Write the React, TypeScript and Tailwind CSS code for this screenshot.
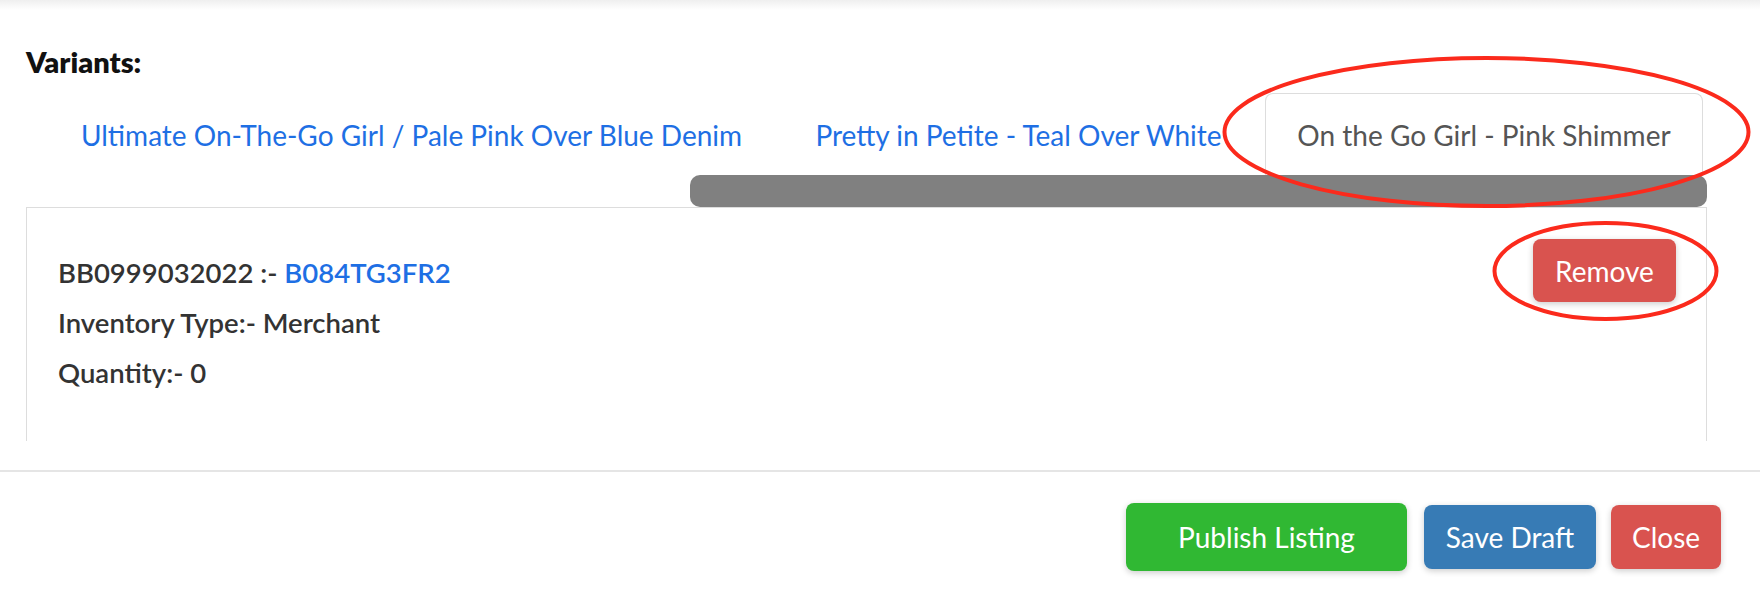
import React from "react";

export default function App() {
  return (
    <div className="relative w-[1760px] h-[592px] overflow-hidden bg-white font-['Lato','Open_Sans',sans-serif]">
      <div className="h-[10px] bg-gradient-to-b from-[#efefef] to-white" />
      <div className="pl-[26px] pt-[32px]">
        <div className="text-[29px] leading-[40px] font-extrabold text-[#111]">Variants:</div>
      </div>

      <div className="relative mt-[11px] h-[114px] pl-[52px]">
        <div className="flex items-start h-[83px]">
          <div className="w-[719px] h-[83px] flex items-center justify-center text-[28px] leading-[40px] text-[#1e6fe4]">
            Ultimate On-The-Go Girl / Pale Pink Over Blue Denim
          </div>
          <div className="ml-[14px] w-[467px] h-[83px] flex items-center justify-center text-[28px] leading-[40px] text-[#1e6fe4]">
            Pretty in Petite - Teal Over White
          </div>
          <div className="ml-[13px] w-[438px] h-[83px] flex items-center justify-center text-[28px] leading-[40px] text-[#555] border border-b-0 border-[#dddddd] rounded-t-[8px] bg-white">
            On the Go Girl - Pink Shimmer
          </div>
        </div>
        <div className="absolute left-[690px] top-[82px] w-[1017px] h-[32px] rounded-[10px] bg-[#808080]" />
      </div>

      <div className="ml-[26px] w-[1681px] h-[234px] overflow-hidden border border-b-0 border-[#dddddd] px-[30px] pt-[31px]">
        <div className="flex justify-between items-start">
          <div className="pt-[14px] pl-[1px] flex flex-col gap-[10px] text-[27.5px] leading-[40px] font-semibold text-[#333]">
            <div>
              BB0999032022 :- <span className="text-[#1e6fe4]">B084TG3FR2</span>
            </div>
            <div>Inventory Type:- Merchant</div>
            <div>Quantity:- 0</div>
          </div>
          <button className="w-[143px] h-[63px] rounded-[8px] bg-[#d9534f] text-white text-[28px] leading-[40px] shadow-[0_2px_6px_rgba(0,0,0,0.2)]">
            Remove
          </button>
        </div>
      </div>

      <div className="mt-[29px] h-[2px] bg-[#e5e5e5]" />

      <div className="flex justify-end items-center pr-[39px] pt-[31px]">
        <button className="w-[281px] h-[68px] rounded-[8px] bg-[#30b833] text-white text-[28px] leading-[40px] shadow-[0_2px_6px_rgba(0,0,0,0.2)]">
          Publish Listing
        </button>
        <button className="ml-[17px] w-[172px] h-[64px] rounded-[8px] bg-[#377bb5] text-white text-[28px] leading-[40px] shadow-[0_2px_6px_rgba(0,0,0,0.2)]">
          Save Draft
        </button>
        <button className="ml-[15px] w-[110px] h-[64px] rounded-[8px] bg-[#d9534f] text-white text-[28px] leading-[40px] shadow-[0_2px_6px_rgba(0,0,0,0.2)]">
          Close
        </button>
      </div>

      <svg className="absolute inset-0 pointer-events-none" width="1760" height="592" viewBox="0 0 1760 592">
        <ellipse cx="1486.5" cy="132" rx="262" ry="74" fill="none" stroke="#fb2a1c" strokeWidth="4" />
        <ellipse cx="1605.5" cy="271" rx="111" ry="48" fill="none" stroke="#fb2a1c" strokeWidth="4" />
      </svg>
    </div>
  );
}
